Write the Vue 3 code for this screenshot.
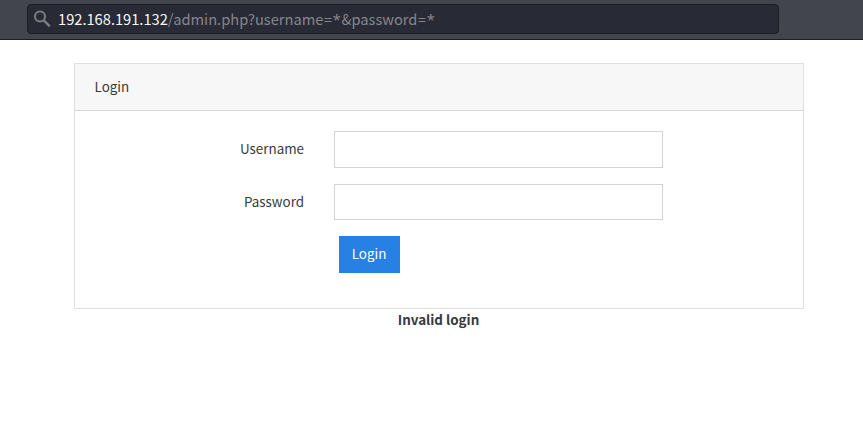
<script setup>
import { ref } from 'vue'

const username = ref('')
const password = ref('')
</script>

<template>
  <div class="page">
    <header class="toolbar">
      <div class="address">
        <svg class="search" viewBox="0 0 18 18" width="18" height="18" aria-hidden="true">
          <circle cx="6" cy="6.6" r="5" fill="none" stroke="currentColor" stroke-width="2" />
          <path d="M9.8 10.4L15.8 16.4" fill="none" stroke="currentColor" stroke-width="2.4" />
        </svg>
        <span class="host">192.168.191.132</span><span class="path">/admin.php?username<span class="value">=*</span>&amp;password<span class="value">=*</span></span>
      </div>
    </header>
    <main class="content">
      <section class="card">
        <div class="card-header">Login</div>
        <form class="card-body" @submit.prevent>
          <label class="label" for="username">Username</label>
          <input id="username" v-model="username" class="field" type="text" />
          <label class="label" for="password">Password</label>
          <input id="password" v-model="password" class="field" type="password" />
          <button class="submit" type="submit">Login</button>
        </form>
      </section>
      <strong class="message">Invalid login</strong>
    </main>
  </div>
</template>

<style>
body {
  background: #fff;
}
</style>

<style scoped>
.page {
  height: 435px;
  overflow: hidden;
  font: 13.4px/22px "Noto Sans CJK SC", sans-serif;
  color: #373a3c;
}
.toolbar {
  box-sizing: border-box;
  height: 40px;
  padding: 4px 0 0 27px;
  background: #42454d;
  border-bottom: 1px solid #1b1d25;
}
.address {
  box-sizing: border-box;
  display: flex;
  align-items: center;
  width: 752px;
  height: 30px;
  padding-left: 6px;
  border: 1px solid #1b1d25;
  border-radius: 4px;
  background: #282a36;
  font-size: 14.67px;
  white-space: nowrap;
}
.search {
  flex: none;
  margin-right: 6px;
  color: #7c7d80;
}
.host {
  color: #f8f8f2;
}
.path {
  color: #85868b;
}
.value {
  margin-left: 0.4px;
  font-family: "Noto Sans", sans-serif;
  letter-spacing: 0.6px;
}
.content {
  display: flex;
  flex-direction: column;
  align-items: center;
  padding: 23px 59px 0 74px;
}
.card {
  box-sizing: border-box;
  width: 100%;
  height: 246px;
  border: 1px solid #dfdfdf;
}
.card-header {
  box-sizing: border-box;
  height: 47px;
  padding: 11px 19.6px;
  background: #f7f7f7;
  border-bottom: 1px solid #d8d8d8;
}
.card-body {
  display: grid;
  grid-template-columns: 229px 329px;
  grid-template-rows: 37px 36px 37px;
  column-gap: 30px;
  row-gap: 16px;
  padding-top: 20px;
}
.label {
  padding-top: 6px;
  text-align: right;
}
.field {
  box-sizing: border-box;
  width: 100%;
  height: 100%;
  padding: 6px 12px;
  border: 1px solid #ced4da;
  border-radius: 0;
  background: #fff;
  font: inherit;
  outline: none;
}
.submit {
  grid-column: 2;
  width: 61px;
  height: 37px;
  margin-left: 5px;
  padding: 0 1px 3px 0;
  border: 0;
  background: #2780e3;
  color: #fff;
  font: inherit;
}
.message {
  padding-right: 1px;
  line-height: 21px;
  font-weight: 700;
}
</style>
